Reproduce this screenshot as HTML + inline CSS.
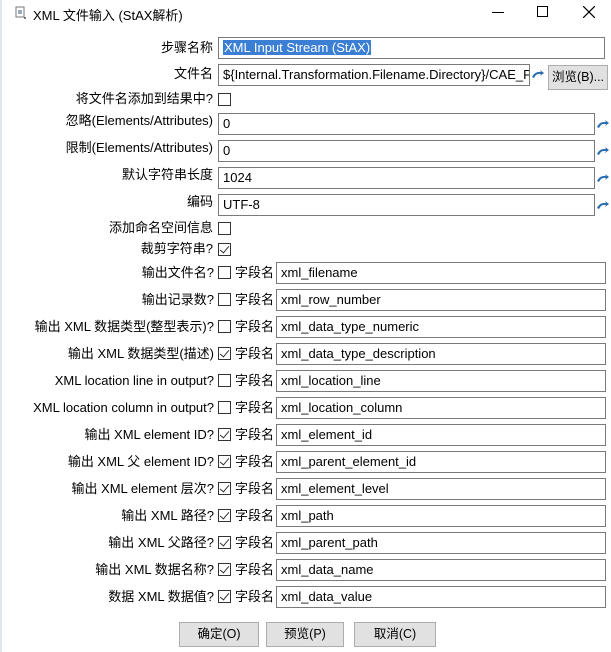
<!DOCTYPE html>
<html><head><meta charset="utf-8"><style>
*{margin:0;padding:0;box-sizing:border-box}
body{width:611px;height:652px;background:#fff;position:relative;overflow:hidden;font-family:"Liberation Sans","Noto Sans CJK SC",sans-serif;font-size:13px;color:#000}
.a{position:absolute;white-space:nowrap}
.lbl{position:absolute;white-space:nowrap;text-align:right;height:22px;line-height:22px}
.in{position:absolute;border:1px solid #7a7a7a;background:#fff;height:22px;line-height:20px;padding-left:4px;font-size:13px;overflow:hidden;white-space:nowrap}
.cb{position:absolute;width:13px;height:13px;border:1px solid #333;background:#fff}
.cb.on::after{content:"";position:absolute;left:3px;top:0px;width:4px;height:8px;border:solid #333;border-width:0 1.5px 1.5px 0;transform:rotate(40deg)}
.btn{position:absolute;background:#e1e1e1;border:1px solid #adadad;text-align:center;font-size:12.5px}
.ic{position:absolute;width:13px;height:10px}
</style></head><body>
<div class="a" style="left:0;top:0;width:2px;height:652px;background:#dfe6ee"></div>
<svg class="a" style="left:14px;top:6px" width="14" height="14" viewBox="0 0 14 14"><rect x="2" y="1" width="8" height="10" fill="none" stroke="#777"/><rect x="4" y="4" width="4" height="4" fill="#9ab"/><circle cx="11" cy="12" r="1" fill="#555"/></svg>
<div class="a" style="left:33px;top:5px;font-size:13px">XML 文件输入 (StAX解析)</div>
<div class="a" style="left:492px;top:12px;width:12px;height:1px;background:#000"></div>
<div class="a" style="left:537px;top:6px;width:11px;height:11px;border:1px solid #000"></div>
<svg class="a" style="left:583px;top:6px" width="12" height="12" viewBox="0 0 12 12"><path d="M0 0L12 12M12 0L0 12" stroke="#000" stroke-width="1.2"/></svg>

<div class="lbl" style="right:398px;top:37px">步骤名称</div>
<div class="in" style="left:218px;top:37px;width:387px"><span style="background:#3b7fd4;color:#fff;padding:0 1px">XML Input Stream (StAX)</span></div>
<div class="lbl" style="right:398px;top:63px">文件名</div>
<div class="in" style="left:218px;top:64px;width:312px">${Internal.Transformation.Filename.Directory}/CAE_Pa</div>
<svg class="ic" style="left:531px;top:70px" viewBox="0 0 13 10"><path d="M1 7 Q4 1 10 2 L9 0 L13 3 L9 6 L10 4 Q5 3 3 8 Z" fill="#2a6cb0"/></svg>
<div class="btn" style="left:548px;top:65px;width:60px;height:25px;line-height:23px">浏览(B)...</div>
<div class="lbl" style="right:398px;top:88px">将文件名添加到结果中?</div>
<div class="cb" style="left:218px;top:93px"></div>

<div class="lbl" style="right:398px;top:110px">忽略(Elements/Attributes)</div>
<div class="in" style="left:218px;top:113px;width:377px">0</div>
<div class="lbl" style="right:398px;top:137px">限制(Elements/Attributes)</div>
<div class="in" style="left:218px;top:140px;width:377px">0</div>
<div class="lbl" style="right:398px;top:164px">默认字符串长度</div>
<div class="in" style="left:218px;top:167px;width:377px">1024</div>
<div class="lbl" style="right:398px;top:191px">编码</div>
<div class="in" style="left:218px;top:194px;width:377px">UTF-8</div>
<svg class="ic" style="left:596px;top:120px" viewBox="0 0 13 10"><path d="M1 7 Q4 1 10 2 L9 0 L13 3 L9 6 L10 4 Q5 3 3 8 Z" fill="#2a6cb0"/></svg>
<svg class="ic" style="left:596px;top:147px" viewBox="0 0 13 10"><path d="M1 7 Q4 1 10 2 L9 0 L13 3 L9 6 L10 4 Q5 3 3 8 Z" fill="#2a6cb0"/></svg>
<svg class="ic" style="left:596px;top:174px" viewBox="0 0 13 10"><path d="M1 7 Q4 1 10 2 L9 0 L13 3 L9 6 L10 4 Q5 3 3 8 Z" fill="#2a6cb0"/></svg>
<svg class="ic" style="left:596px;top:201px" viewBox="0 0 13 10"><path d="M1 7 Q4 1 10 2 L9 0 L13 3 L9 6 L10 4 Q5 3 3 8 Z" fill="#2a6cb0"/></svg>

<div class="lbl" style="right:398px;top:217px">添加命名空间信息</div>
<div class="cb" style="left:218px;top:222px"></div>
<div class="lbl" style="right:398px;top:238px">裁剪字符串?</div>
<div class="cb on" style="left:218px;top:243px"></div>

<div class="lbl" style="right:397px;top:262px">输出文件名?</div><div class="cb" style="left:218px;top:266px"></div><div class="lbl" style="left:235px;top:262px">字段名</div><div class="in" style="left:276px;top:262px;width:330px">xml_filename</div>
<div class="lbl" style="right:397px;top:289px">输出记录数?</div><div class="cb" style="left:218px;top:293px"></div><div class="lbl" style="left:235px;top:289px">字段名</div><div class="in" style="left:276px;top:289px;width:330px">xml_row_number</div>
<div class="lbl" style="right:397px;top:316px">输出 XML 数据类型(整型表示)?</div><div class="cb" style="left:218px;top:320px"></div><div class="lbl" style="left:235px;top:316px">字段名</div><div class="in" style="left:276px;top:316px;width:330px">xml_data_type_numeric</div>
<div class="lbl" style="right:397px;top:343px">输出 XML 数据类型(描述)</div><div class="cb on" style="left:218px;top:347px"></div><div class="lbl" style="left:235px;top:343px">字段名</div><div class="in" style="left:276px;top:343px;width:330px">xml_data_type_description</div>
<div class="lbl" style="right:397px;top:370px">XML location line in output?</div><div class="cb" style="left:218px;top:374px"></div><div class="lbl" style="left:235px;top:370px">字段名</div><div class="in" style="left:276px;top:370px;width:330px">xml_location_line</div>
<div class="lbl" style="right:397px;top:397px">XML location column in output?</div><div class="cb" style="left:218px;top:401px"></div><div class="lbl" style="left:235px;top:397px">字段名</div><div class="in" style="left:276px;top:397px;width:330px">xml_location_column</div>
<div class="lbl" style="right:397px;top:424px">输出 XML element ID?</div><div class="cb on" style="left:218px;top:428px"></div><div class="lbl" style="left:235px;top:424px">字段名</div><div class="in" style="left:276px;top:424px;width:330px">xml_element_id</div>
<div class="lbl" style="right:397px;top:451px">输出 XML 父 element ID?</div><div class="cb on" style="left:218px;top:455px"></div><div class="lbl" style="left:235px;top:451px">字段名</div><div class="in" style="left:276px;top:451px;width:330px">xml_parent_element_id</div>
<div class="lbl" style="right:397px;top:478px">输出 XML element 层次?</div><div class="cb on" style="left:218px;top:482px"></div><div class="lbl" style="left:235px;top:478px">字段名</div><div class="in" style="left:276px;top:478px;width:330px">xml_element_level</div>
<div class="lbl" style="right:397px;top:505px">输出 XML 路径?</div><div class="cb on" style="left:218px;top:509px"></div><div class="lbl" style="left:235px;top:505px">字段名</div><div class="in" style="left:276px;top:505px;width:330px">xml_path</div>
<div class="lbl" style="right:397px;top:532px">输出 XML 父路径?</div><div class="cb on" style="left:218px;top:536px"></div><div class="lbl" style="left:235px;top:532px">字段名</div><div class="in" style="left:276px;top:532px;width:330px">xml_parent_path</div>
<div class="lbl" style="right:397px;top:559px">输出 XML 数据名称?</div><div class="cb on" style="left:218px;top:563px"></div><div class="lbl" style="left:235px;top:559px">字段名</div><div class="in" style="left:276px;top:559px;width:330px">xml_data_name</div>
<div class="lbl" style="right:397px;top:586px">数据 XML 数据值?</div><div class="cb on" style="left:218px;top:590px"></div><div class="lbl" style="left:235px;top:586px">字段名</div><div class="in" style="left:276px;top:586px;width:330px">xml_data_value</div>

<div class="btn" style="left:179px;top:622px;width:80px;height:25px;line-height:23px">确定(O)</div>
<div class="btn" style="left:266px;top:622px;width:78px;height:25px;line-height:23px">预览(P)</div>
<div class="btn" style="left:354px;top:622px;width:82px;height:25px;line-height:23px">取消(C)</div>
</body></html>
